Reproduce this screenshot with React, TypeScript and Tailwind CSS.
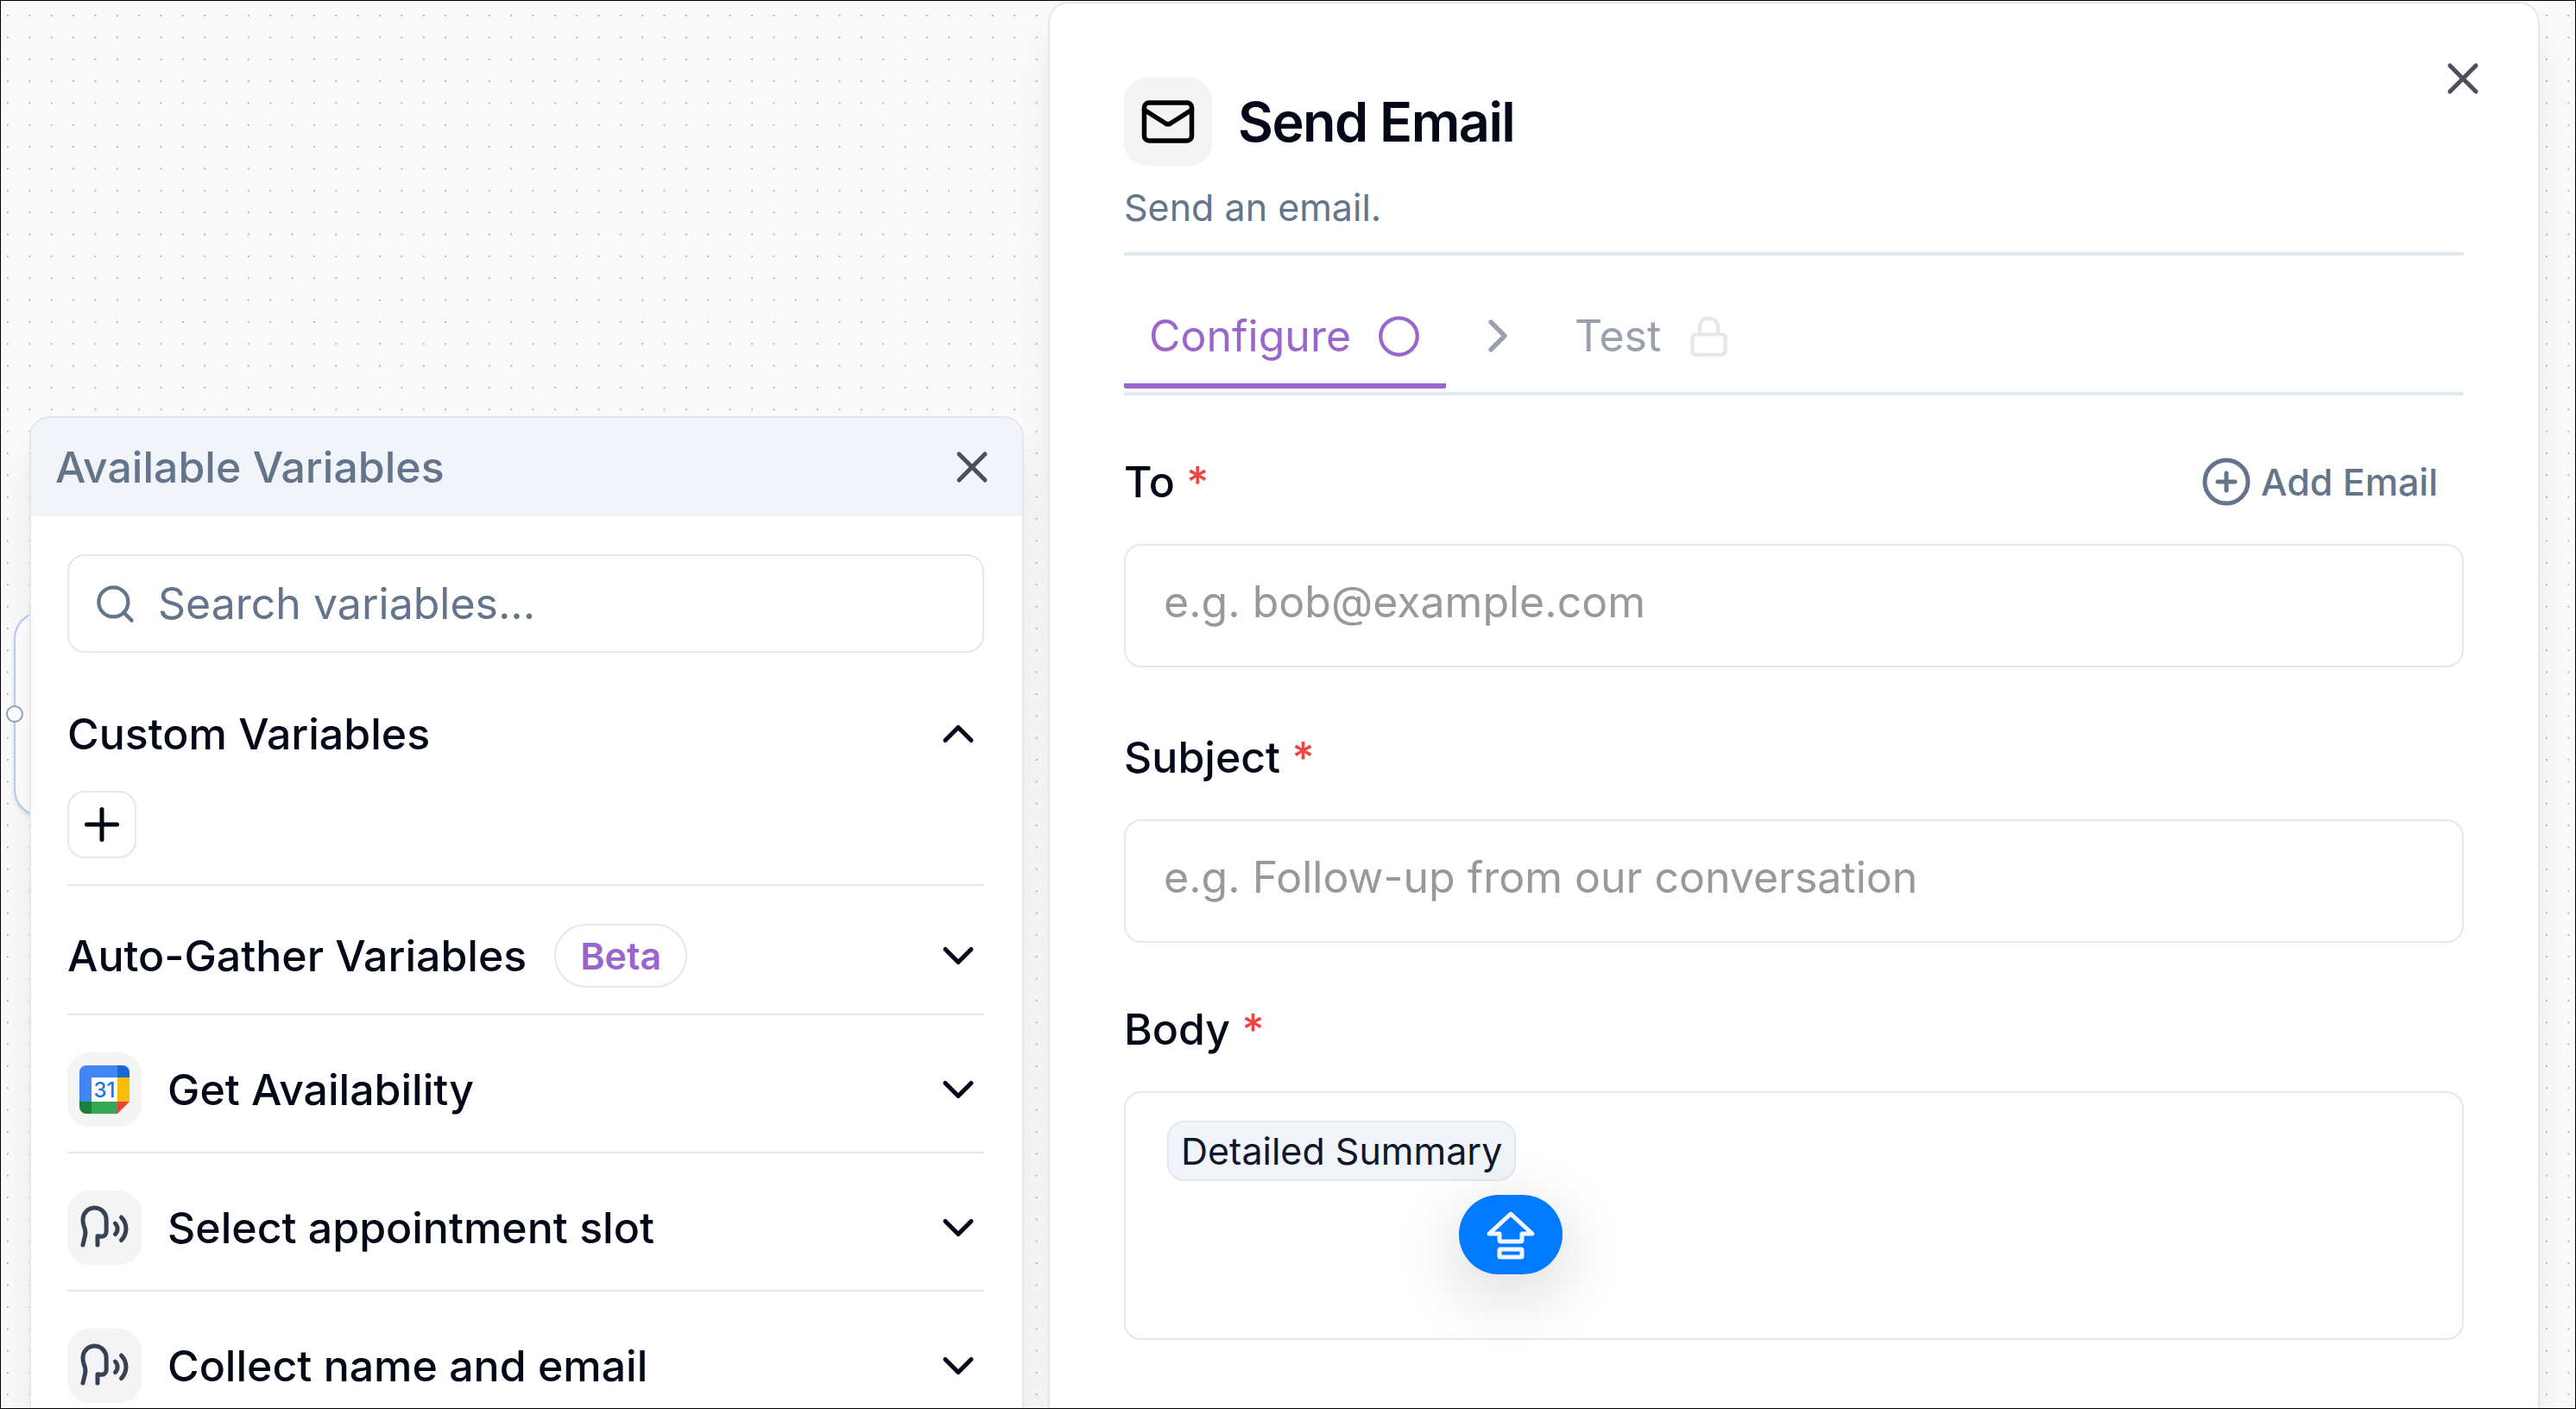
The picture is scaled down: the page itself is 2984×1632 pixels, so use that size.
import { useState } from 'react'
import type { ReactNode } from 'react'
import { ChevronDown, ChevronRight, ChevronUp, Circle, CirclePlus, Lock, Mail, Plus, Search, Speech, X } from 'lucide-react'

// Canvas dots: 20 units apart, drawn at the current zoom level
const ZOOM = 1.2677

function CanvasBackground() {
  return (
    <svg className="absolute inset-0 h-full w-full" aria-hidden="true">
      <defs>
        <pattern id="dots" x="7" y="16" width={20 * ZOOM} height={20 * ZOOM} patternUnits="userSpaceOnUse">
          <circle cx="1" cy="1" r="1" fill="#a3a3a3" />
        </pattern>
      </defs>
      <rect width="100%" height="100%" fill="url(#dots)" />
    </svg>
  )
}

function CalendarIcon() {
  return (
    <svg className="size-[58px]" viewBox="0 0 58 56" aria-hidden="true">
      <path d="M8 0H44V14H14V42H0V8A8 8 0 0 1 8 0Z" fill="#4285f4" />
      <path d="M44 0H50A8 8 0 0 1 58 8V14H44Z" fill="#1967d2" />
      <path d="M44 14H58V42H44Z" fill="#fbbc04" />
      <path d="M14 42H44V56H14Z" fill="#34a853" />
      <path d="M0 42H14V56H8A8 8 0 0 1 0 48Z" fill="#188038" />
      <path d="M44 42H58L44 56Z" fill="#ea4335" />
      <path d="M14 14H44V42H14Z" fill="#fff" />
      <text x="29" y="37" textAnchor="middle" fontSize="24" fontWeight="500" fill="#1a73e8">31</text>
    </svg>
  )
}

function CapsLockIcon() {
  return (
    <svg className="size-[60px]" viewBox="0 0 60 60" fill="none" stroke="#f1f5ff" strokeWidth="5" strokeLinejoin="round" aria-hidden="true">
      <path d="M30 6L55 29H43V36Q43 38 41 38H19Q17 38 17 36V29H5Z" />
      <rect x="17" y="47" width="26" height="9" rx="1" />
    </svg>
  )
}

function IconTile({ children }: { children: ReactNode }) {
  return (
    <span className="flex size-[86px] shrink-0 items-center justify-center rounded-[26px] bg-[#f4f4f4] text-gray-700">
      {children}
    </span>
  )
}

const steps = [
  { label: 'Get Availability', icon: <CalendarIcon /> },
  { label: 'Select appointment slot', icon: <Speech size={60} /> },
  { label: 'Collect name and email', icon: <Speech size={60} /> },
]

function VariablesPanel() {
  const [search, setSearch] = useState('')

  return (
    <aside className="mt-[481px] overflow-hidden rounded-t-[24px] border-2 border-b-0 border-slate-200 bg-white shadow-[0_32px_48px_-10px_rgba(0,0,0,0.1),0_13px_19px_-13px_rgba(0,0,0,0.1)]">
      <header className="flex h-[114px] items-center justify-between bg-slate-100 px-[28px]">
        <h2 className="font-medium text-[#64748b]">Available Variables</h2>
        <button type="button" aria-label="Close variables" className="text-[#4b4f5a]">
          <X size={60} />
        </button>
      </header>

      <div className="pt-[44px] pr-[44px] pl-[42px]">
        <label className="flex h-[114px] items-center gap-[24px] rounded-[20px] border-2 border-slate-200 px-[28px] text-[#64748b]">
          <Search size={51} className="shrink-0" />
          <input
            type="text"
            aria-label="Search variables"
            placeholder="Search variables..."
            value={search}
            onChange={(e) => setSearch(e.target.value)}
            className="w-full min-w-0 outline-none placeholder:text-[#64748b]"
          />
        </label>

        {/* Custom variables */}
        <section className="border-b-2 border-slate-200 pt-[64px] pb-[30px]">
          <button type="button" aria-expanded="true" className="flex h-[60px] w-full items-center justify-between font-medium">
            Custom Variables
            <ChevronUp size={60} />
          </button>
          <button type="button" aria-label="Add custom variable" className="mt-[36px] flex h-[78px] w-[80px] items-center justify-center rounded-[20px] border-2 border-slate-200">
            <Plus size={60} />
          </button>
        </section>

        <button type="button" aria-expanded="false" className="flex h-[150px] w-full items-center gap-[32px] border-b-2 border-slate-200 pt-[14px] font-medium">
          Auto-Gather Variables
          <span className="rounded-full border-2 border-slate-200 px-[28px] text-[43px]/[70px] font-semibold text-[#9966cc]">Beta</span>
          <ChevronDown size={60} className="ml-auto" />
        </button>

        {steps.map((step) => (
          <button
            key={step.label}
            type="button"
            aria-expanded="false"
            className="flex h-[160px] w-full items-center gap-[30px] border-b-2 border-slate-200 pt-[14px] font-medium"
          >
            <IconTile>{step.icon}</IconTile>
            {step.label}
            <ChevronDown size={60} className="ml-auto" />
          </button>
        ))}
      </div>
    </aside>
  )
}

function FieldLabel({ htmlFor, children }: { htmlFor: string; children: ReactNode }) {
  return (
    <label htmlFor={htmlFor} className="font-medium">
      {children} <span className="text-[#ef4444]">*</span>
    </label>
  )
}

function EmailPanel() {
  return (
    <main className="relative mt-px rounded-t-[24px] border-2 border-b-0 border-slate-200 bg-white px-[86px] pt-[86px] shadow-[0_32px_48px_-10px_rgba(0,0,0,0.1),0_13px_19px_-13px_rgba(0,0,0,0.1)]">
      <button type="button" aria-label="Close" className="absolute top-[57px] right-[57px] text-[#4b4f5a]">
        <X size={60} />
      </button>

      <header className="border-b-4 border-slate-200 pb-[22px]">
        <div className="flex items-center gap-[30px]">
          <span className="flex size-[102px] items-center justify-center rounded-[26px] bg-[#f4f4f4] text-black">
            <Mail size={66} />
          </span>
          <h1 className="text-[63px]/[80px] font-semibold tracking-tight">Send Email</h1>
        </div>
        <p className="mt-[18px] text-[43px]/[60px] text-[#64748b]">Send an email.</p>
      </header>

      {/* Steps */}
      <nav className="flex h-[162px] items-end gap-[28px] border-b-4 border-slate-200 pb-[4px]">
        <button type="button" className="flex h-[116px] items-center gap-[30px] rounded-[2px] border-b-6 border-[#9966cc] px-[29px] text-[#9966cc]">
          Configure
          <Circle size={51} />
        </button>
        <span className="flex h-[116px] items-center pb-[6px] text-gray-400">
          <ChevronRight size={64} />
        </span>
        <button type="button" disabled className="flex h-[116px] items-center gap-[30px] px-[29px] pb-[6px] text-gray-400">
          Test
          <Lock size={51} className="text-gray-200" />
        </button>
      </nav>

      <form>
        <div className="flex items-center justify-between pt-[64px]">
          <FieldLabel htmlFor="to">To</FieldLabel>
          <button type="button" className="flex items-center gap-[10px] pr-[30px] text-[43px]/[72px] font-medium text-[#64748b]">
            <CirclePlus size={60} />
            Add Email
          </button>
        </div>
        <input
          id="to"
          type="email"
          placeholder="e.g. bob@example.com"
          className="mt-[36px] block h-[143px] w-full rounded-[20px] border-2 border-slate-200 px-[44px] pb-[10px] placeholder:text-[#999]"
        />

        <div className="flex pt-[68px]">
          <FieldLabel htmlFor="subject">Subject</FieldLabel>
        </div>
        <input
          id="subject"
          type="text"
          placeholder="e.g. Follow-up from our conversation"
          className="mt-[36px] block h-[143px] w-full rounded-[20px] border-2 border-slate-200 px-[44px] pb-[10px] placeholder:text-[#999]"
        />

        <div className="flex pt-[64px]">
          <FieldLabel htmlFor="body">Body</FieldLabel>
        </div>
        <div
          id="body"
          role="textbox"
          aria-multiline="true"
          aria-label="Body"
          tabIndex={0}
          className="mt-[36px] flex h-[288px] w-full items-start rounded-[20px] border-2 border-slate-200 px-[48px] py-[32px]"
        >
          <span className="relative rounded-[20px] border-2 border-slate-200 bg-slate-100 px-[14px] text-[43px]/[66px] text-slate-900">
            Detailed Summary
            {/* Caps lock indicator under the caret */}
            <span className="absolute top-[84px] -right-[56px] flex h-[92px] w-[120px] items-center justify-center rounded-full bg-[#007aff] shadow-[0_20px_70px_10px_rgba(0,0,0,0.12)]">
              <CapsLockIcon />
            </span>
          </span>
        </div>
      </form>
    </main>
  )
}

export default function App() {
  return (
    <div className="relative h-screen overflow-hidden border border-black bg-[#fafafa] font-['Inter',sans-serif] text-[50px]/[72px] text-[#020817]">
      <CanvasBackground />

      {/* Workflow node peeking out behind the variables panel */}
      <div className="absolute top-[707px] left-[15px] h-[238px] w-[400px] rounded-[32px] border-2 border-[#b5cbf5] bg-white shadow-md">
        <span className="absolute top-[107px] -left-[11px] size-[20px] rounded-full border-2 border-slate-400 bg-white" />
      </div>

      <div className="relative grid h-full grid-cols-[2fr_3fr] gap-[28px] pr-[41px] pl-[33px]">
        <VariablesPanel />
        <EmailPanel />
      </div>
    </div>
  )
}
